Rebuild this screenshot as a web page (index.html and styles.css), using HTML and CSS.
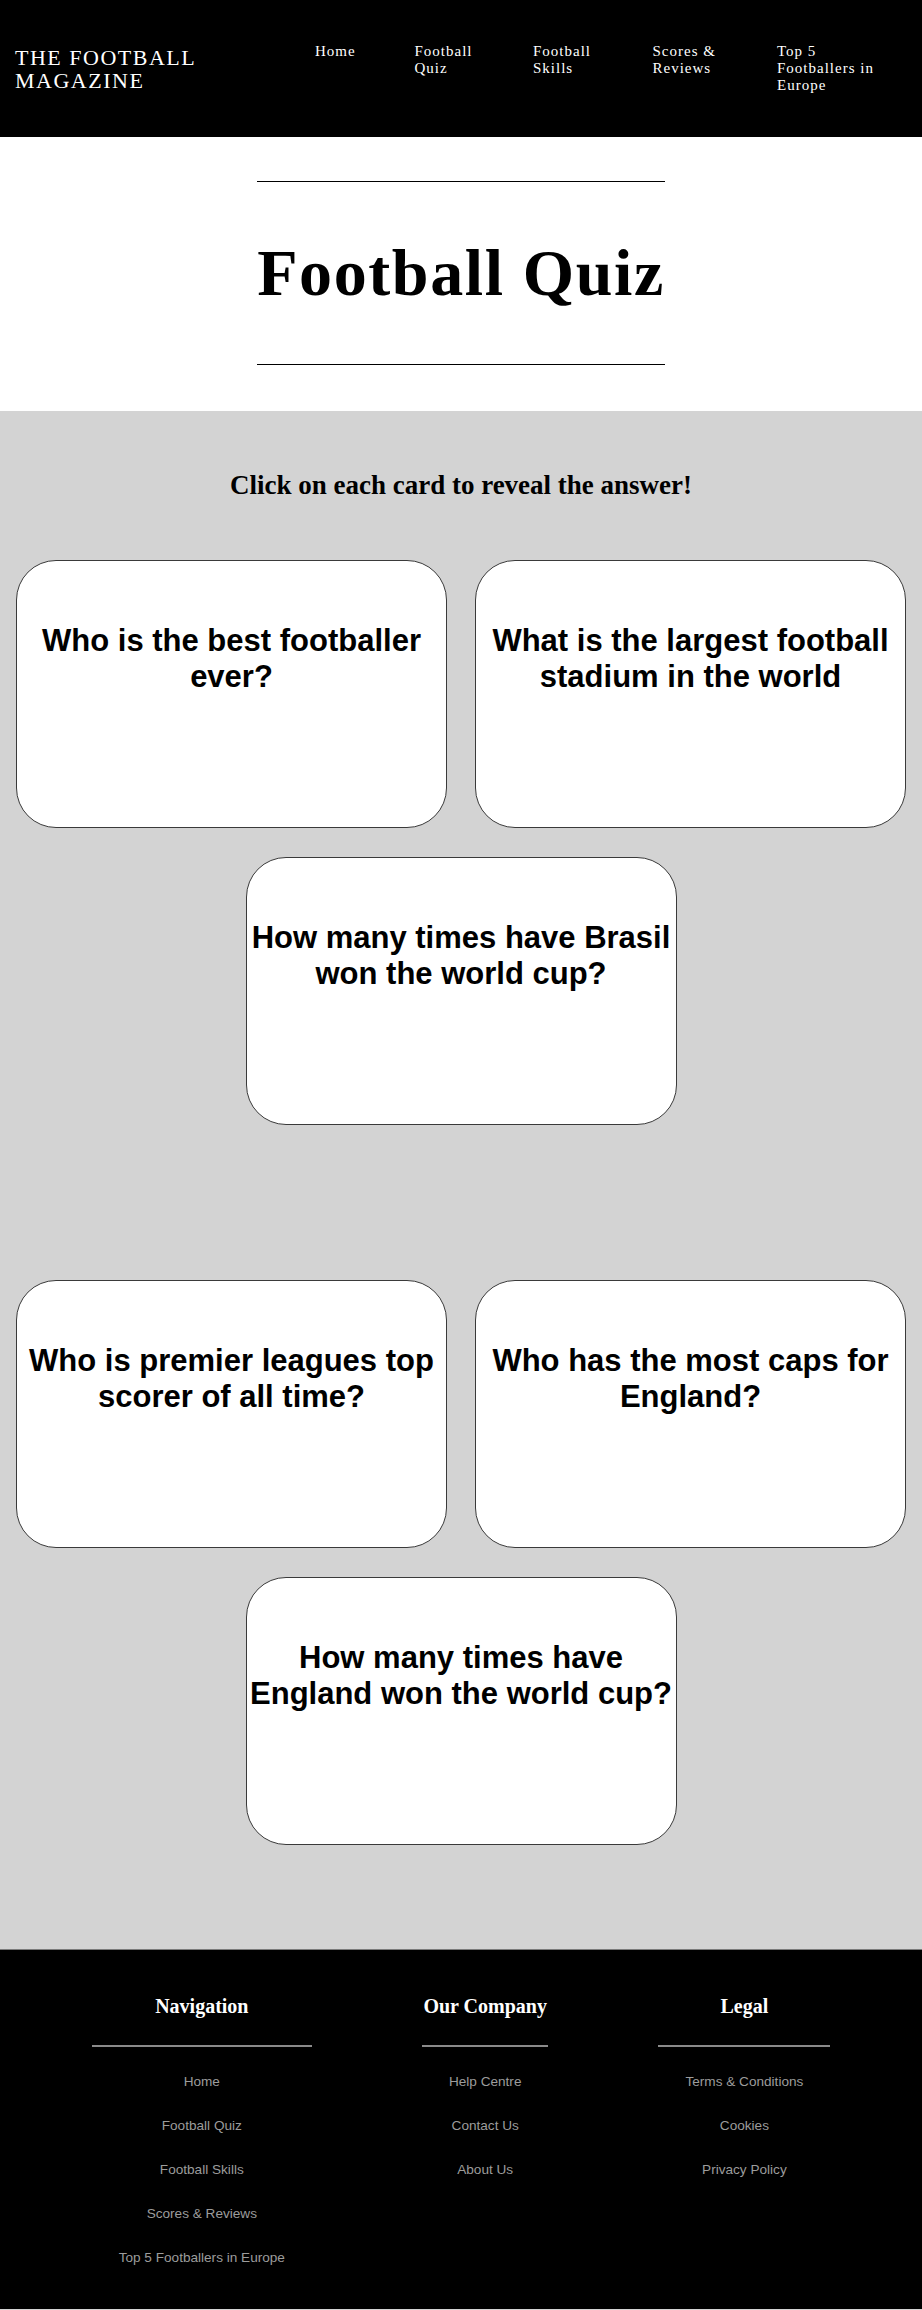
FILE: index.html
```html
<!DOCTYPE html>
<html lang="en">
<head>
<meta charset="utf-8">
<title>Football Quiz</title>
<link rel="stylesheet" href="styles.css">
</head>
<body>
<header class="site-header">
  <div class="logo">THE FOOTBALL<br>MAGAZINE</div>
  <nav class="main-nav">
    <ul class="nav-list">
      <li class="nav-item nav-home"><a href="#">Home</a></li>
      <li class="nav-item nav-quiz"><a href="#">Football Quiz</a></li>
      <li class="nav-item nav-skills"><a href="#">Football Skills</a></li>
      <li class="nav-item nav-scores"><a href="#">Scores &amp; Reviews</a></li>
      <li class="nav-item nav-top"><a href="#">Top 5 Footballers in Europe</a></li>
    </ul>
  </nav>
</header>

<section class="title-section">
  <h1 class="page-title">Football Quiz</h1>
</section>

<main class="quiz-section">
  <h2 class="quiz-intro">Click on each card to reveal the answer!</h2>
  <div class="card-grid">
    <div class="card"><p class="card-question">Who is the best footballer ever?</p></div>
    <div class="card"><p class="card-question">What is the largest football stadium in the world</p></div>
    <div class="card"><p class="card-question">How many times have Brasil won the world cup?</p></div>
  </div>
  <div class="card-grid card-grid-second">
    <div class="card"><p class="card-question">Who is premier leagues top scorer of all time?</p></div>
    <div class="card"><p class="card-question">Who has the most caps for England?</p></div>
    <div class="card"><p class="card-question">How many times have England won the world cup?</p></div>
  </div>
</main>

<footer class="site-footer">
  <div class="footer-col">
    <h3 class="footer-heading">Navigation</h3>
    <ul class="footer-list">
      <li><a href="#">Home</a></li>
      <li><a href="#">Football Quiz</a></li>
      <li><a href="#">Football Skills</a></li>
      <li><a href="#">Scores &amp; Reviews</a></li>
      <li><a href="#">Top 5 Footballers in Europe</a></li>
    </ul>
  </div>
  <div class="footer-col">
    <h3 class="footer-heading">Our Company</h3>
    <ul class="footer-list">
      <li><a href="#">Help Centre</a></li>
      <li><a href="#">Contact Us</a></li>
      <li><a href="#">About Us</a></li>
    </ul>
  </div>
  <div class="footer-col">
    <h3 class="footer-heading">Legal</h3>
    <ul class="footer-list">
      <li><a href="#">Terms &amp; Conditions</a></li>
      <li><a href="#">Cookies</a></li>
      <li><a href="#">Privacy Policy</a></li>
    </ul>
  </div>
</footer>
</body>
</html>
```

FILE: styles.css
```css
* {
  box-sizing: border-box;
}

body {
  margin: 0;
  font-family: "Liberation Serif", "Times New Roman", serif;
  color: #000;
  background: #d3d3d3;
}

a {
  color: inherit;
  text-decoration: none;
}

/* Header */
.site-header {
  height: 137px;
  background: #000;
  color: #fff;
  display: flex;
  align-items: center;
  padding: 0 43px 0 15px;
}

.logo {
  font-size: 22px;
  line-height: 23px;
  letter-spacing: 1.5px;
}

.main-nav {
  margin-left: auto;
}

.nav-list {
  list-style: none;
  margin: 0;
  padding: 0;
  display: flex;
  align-items: flex-start;
  gap: 58.5px;
}

.nav-item {
  font-size: 15px;
  line-height: 17px;
  letter-spacing: 1px;
  flex: none;
}

.nav-home { width: 41px; }
.nav-quiz { width: 60px; }
.nav-skills { width: 61px; }
.nav-scores { width: 66px; }
.nav-top { width: 102px; }

/* Title */
.title-section {
  background: #fff;
  text-align: center;
  padding: 44px 0 46px;
}

.page-title {
  display: inline-block;
  margin: 0;
  padding: 53px 0;
  border-top: 1px solid #000;
  border-bottom: 1px solid #000;
  font-size: 66px;
  font-weight: bold;
  letter-spacing: 1.6px;
  line-height: 76px;
}

/* Quiz */
.quiz-section {
  background: #d3d3d3;
  padding: 59px 0 104px;
}

.quiz-intro {
  margin: 0 0 59px;
  text-align: center;
  font-size: 27px;
  line-height: 31px;
  font-weight: bold;
}

.card-grid {
  display: flex;
  flex-wrap: wrap;
  justify-content: center;
  gap: 29px 28px;
  padding: 0 16px;
}

.card-grid-second {
  margin-top: 155px;
}

.card {
  width: calc((100% - 28px) / 2);
  height: 268px;
  background: #fff;
  border: 1px solid #3a3a3a;
  border-radius: 40px;
  padding: 62px 0 0;
  text-align: center;
}

.card-question {
  margin: 0 -4px;
  font-family: "Liberation Sans", Arial, Helvetica, sans-serif;
  font-size: 31px;
  font-weight: bold;
  line-height: 36px;
}

/* Footer */
.site-footer {
  background: #000;
  border-top: 1px solid #7a7a7a;
  display: flex;
  justify-content: center;
  align-items: flex-start;
  gap: 110px;
  padding: 45px 0 43px;
}

.footer-col {
  display: flex;
  flex-direction: column;
  align-items: center;
}

.footer-heading {
  align-self: stretch;
  margin: 0;
  padding-bottom: 27px;
  border-bottom: 2px solid #8a8a8a;
  color: #fff;
  text-align: center;
  font-size: 20px;
  line-height: 23px;
  font-weight: bold;
}

.footer-list {
  list-style: none;
  margin: 0;
  padding: 0;
  text-align: center;
}

.footer-list li {
  margin-top: 28px;
  padding: 0 27px;
  font-family: "Liberation Sans", Arial, Helvetica, sans-serif;
  font-size: 13.6px;
  line-height: 16px;
  color: #9c9c9c;
}

.footer-list li:first-child {
  margin-top: 27px;
}
```
